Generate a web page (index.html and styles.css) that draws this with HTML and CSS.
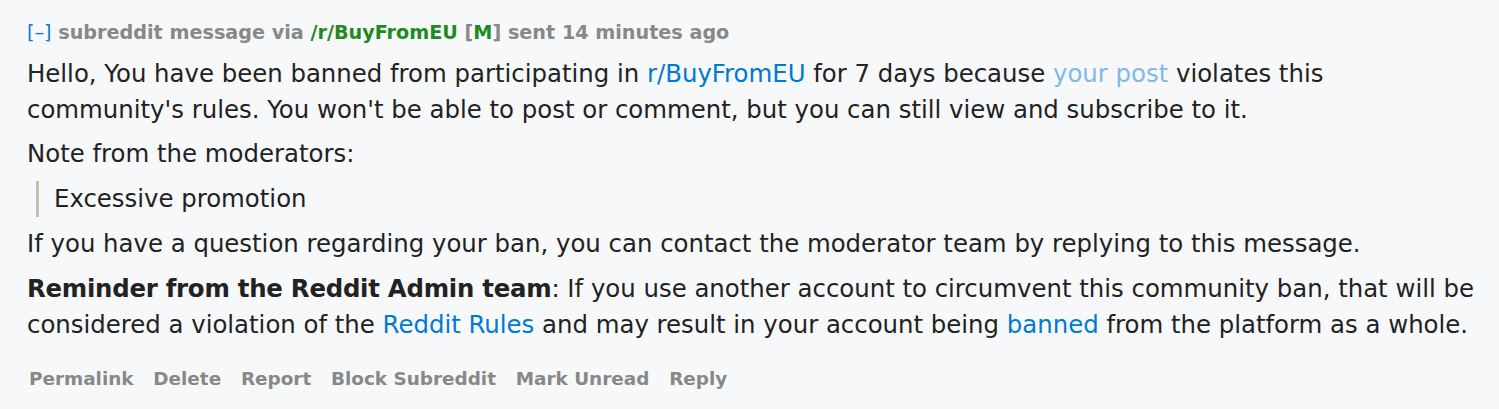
FILE: index.html
```html
<!DOCTYPE html>
<html>
<head>
<meta charset="utf-8">
<link rel="stylesheet" href="styles.css">
</head>
<body>
<div class="message">
  <p class="tagline">
    <a class="expand" href="#">[–]</a>
    <span class="subject">subreddit message via</span>
    <a class="sub" href="#">/r/BuyFromEU</a>
    <span class="mod">[<span class="m">M</span>]</span>
    <span class="subject">sent 14 minutes ago</span>
  </p>
  <div class="md">
    <p>Hello, You have been banned from participating in <a href="#">r/BuyFromEU</a> for 7 days because <a class="visited" href="#">your post</a> violates this community's rules. You won't be able to post or comment, but you can still view and subscribe to it.</p>
    <p>Note from the moderators:</p>
    <blockquote><p>Excessive promotion</p></blockquote>
    <p>If you have a question regarding your ban, you can contact the moderator team by replying to this message.</p>
    <p><strong>Reminder from the Reddit Admin team</strong>: If you use another account to circumvent this community ban, that will be considered a violation of the <a href="#">Reddit Rules</a> and may result in your account being <a href="#">banned</a> from the platform as a whole.</p>
  </div>
  <ul class="buttons">
    <li><a href="#">Permalink</a></li>
    <li><a href="#">Delete</a></li>
    <li><a href="#">Report</a></li>
    <li><a href="#">Block Subreddit</a></li>
    <li><a href="#">Mark Unread</a></li>
    <li><a href="#">Reply</a></li>
  </ul>
</div>
</body>
</html>
```
FILE: styles.css
```css
html, body {
  margin: 0;
  padding: 0;
  background: #f7f8fa;
}
body {
  font-family: Verdana, "DejaVu Sans", sans-serif;
  color: #222;
}
a { text-decoration: none; }
.message {
  padding: 20px 0 0 27px;
}
.tagline {
  margin: 0;
  font-size: 19.2px;
  font-weight: bold;
  line-height: 26px;
  color: #888;
  white-space: nowrap;
}
.tagline .expand {
  color: #1a76d2;
  font-weight: normal;
}
.tagline .sub { color: #228822; }
.tagline .mod { color: #888; }
.tagline .m { color: #228822; }
.md {
  font-size: 24.4px;
  line-height: 36px;
  color: #222;
  margin-top: 10px;
  max-width: 1455px;
}
.md p { margin: 0 0 9px 0; }
.md p:first-child { margin-bottom: 8px; }
.md a { color: #0079d3; }
.md a.visited { color: #7fb9e8; }
.md blockquote {
  margin: 0 0 9px 9px;
  padding: 0 0 0 15px;
  border-left: 3px solid #c5c1ad;
}
.md strong {
  font-weight: bold;
  letter-spacing: -0.25px;
}
.buttons {
  list-style: none;
  margin: 23px 0 0 2px;
  padding: 0;
  display: flex;
  gap: 19.8px;
  font-size: 18.4px;
  font-weight: bold;
  line-height: 26px;
}
.buttons a { color: #888; }
```
